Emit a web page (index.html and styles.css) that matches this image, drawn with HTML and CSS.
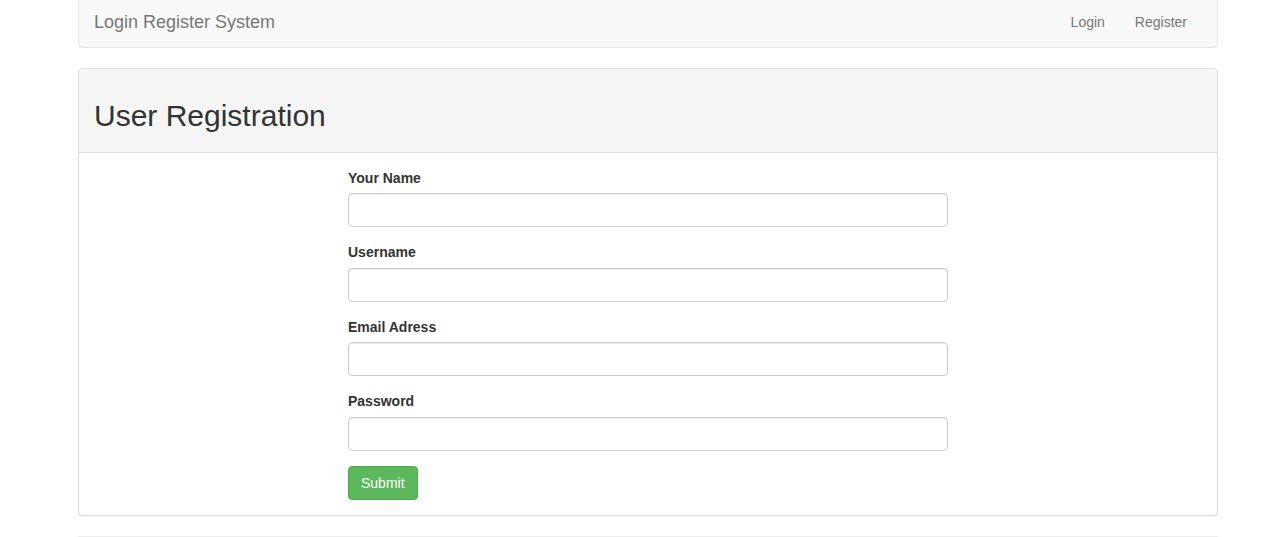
FILE: index.html
```html
<!DOCTYPE html>
<html>
<head>
<meta charset="utf-8">
<title>User Registration</title>
<link rel="stylesheet" href="styles.css">
</head>
<body>
<div class="container">
  <nav class="navbar">
    <a class="brand" href="#">Login Register System</a>
    <ul class="nav">
      <li><a href="#">Login</a></li>
      <li><a href="#">Register</a></li>
    </ul>
  </nav>
  <div class="panel">
    <div class="panel-heading">
      <h2>User Registration</h2>
    </div>
    <div class="panel-body">
      <form class="form">
        <div class="form-group">
          <label>Your Name</label>
          <input type="text" class="form-control">
        </div>
        <div class="form-group">
          <label>Username</label>
          <input type="text" class="form-control">
        </div>
        <div class="form-group">
          <label>Email Adress</label>
          <input type="email" class="form-control">
        </div>
        <div class="form-group">
          <label>Password</label>
          <input type="password" class="form-control">
        </div>
        <button type="button" class="btn-success">Submit</button>
      </form>
    </div>
  </div>
  <hr class="rule">
</div>
</body>
</html>
```

FILE: styles.css
```css
* { box-sizing: border-box; }
html, body { margin: 0; padding: 0; background: #fff; }
body {
  font-family: "Liberation Sans", Arial, Helvetica, sans-serif;
  font-size: 14px;
  line-height: 20px;
  color: #333;
}
.container {
  width: 1140px;
  margin-left: 78px;
  margin-top: -4px;
}
.navbar {
  display: flex;
  align-items: center;
  justify-content: space-between;
  height: 52px;
  background: #f8f8f8;
  border: 1px solid #e7e7e7;
  border-radius: 4px;
  margin-bottom: 20px;
  padding: 0 15px;
}
.brand {
  font-size: 18px;
  line-height: 20px;
  color: #777;
  text-decoration: none;
  padding: 15px 0;
}
.nav {
  display: flex;
  list-style: none;
  margin: 0;
  padding: 0;
}
.nav a {
  display: block;
  padding: 15px;
  color: #777;
  text-decoration: none;
  font-size: 14px;
  line-height: 20px;
}
.panel {
  border: 1px solid #ddd;
  border-radius: 4px;
  background: #fff;
  box-shadow: 0 1px 1px rgba(0,0,0,.05);
}
.panel-heading {
  background: #f5f5f5;
  border-bottom: 1px solid #ddd;
  border-radius: 3px 3px 0 0;
  padding: 10px 15px;
}
.panel-heading h2 {
  margin: 20px 0 10px;
  font-size: 30px;
  font-weight: 500;
  line-height: 33px;
  color: #333;
}
.panel-body {
  padding: 15px;
}
.form {
  width: 600px;
  margin: 0 auto;
}
.form-group {
  margin-bottom: 15px;
}
.form-group label {
  display: block;
  font-weight: bold;
  margin-bottom: 5px;
  line-height: 20.4px;
}
.form-control {
  display: block;
  width: 100%;
  height: 34px;
  padding: 6px 12px;
  font-family: inherit;
  font-size: 14px;
  color: #555;
  background: #fff;
  border: 1px solid #ccc;
  border-radius: 4px;
  box-shadow: inset 0 1px 1px rgba(0,0,0,.075);
}
.btn-success {
  display: inline-block;
  padding: 6px 12px;
  font-family: inherit;
  font-size: 14px;
  line-height: 20px;
  color: #fff;
  background: #5cb85c;
  border: 1px solid #4cae4c;
  border-radius: 4px;
  cursor: pointer;
}
.rule {
  margin: 20px 0;
  border: 0;
  border-top: 1px solid #eee;
}
```
